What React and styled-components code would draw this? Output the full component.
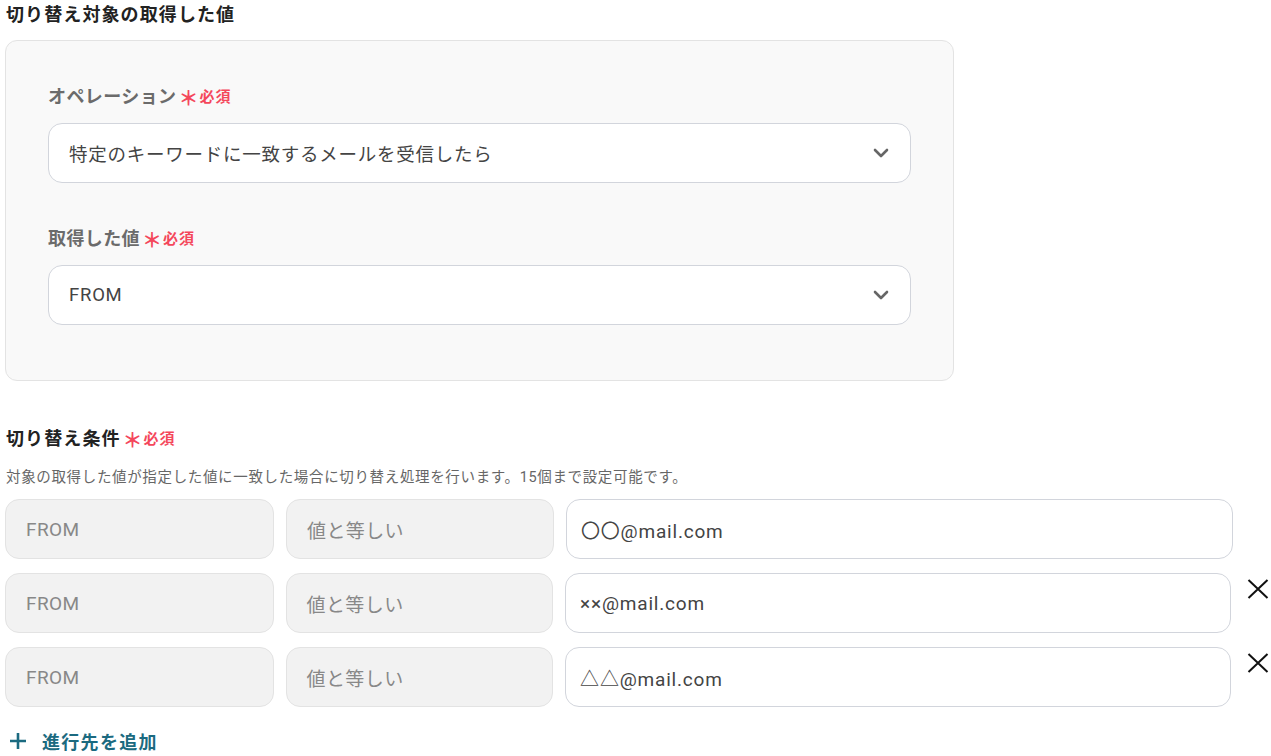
import styled, { createGlobalStyle } from "styled-components";

const GlobalStyle = createGlobalStyle`
  html, body {
    margin: 0;
    padding: 0;
    background: #fff;
  }
  body {
    font-family: Roboto, "Noto Sans CJK JP", sans-serif;
    color: #333;
  }
`;

const Page = styled.div`
  width: 1271px;
  padding: 2px 0 0 5px;
  box-sizing: border-box;
`;

const SectionTitle = styled.div`
  height: 26px;
  display: flex;
  align-items: center;
  gap: 5px;
  padding-left: 1px;
  font-size: 18px;
  font-weight: 700;
  letter-spacing: 1.1px;
  line-height: 26px;
  color: #222;
`;

const Required = styled.span`
  display: inline-flex;
  align-items: center;
  gap: 3px;
  height: 20px;
  line-height: 20px;
  color: #f4475b;
  font-size: 15px;
  font-weight: 700;
  letter-spacing: 1px;

  &::before {
    content: "＊";
    font-size: 20px;
    line-height: 1;
    margin-left: -3px;
    margin-right: -3px;
    margin-top: 4px;
  }
`;

const Panel = styled.div`
  margin-top: 12px;
  width: 949px;
  box-sizing: border-box;
  padding: 43px 42px 55px;
  background: #f9f9f9;
  border: 1px solid #e3e3e3;
  border-radius: 12px;
  display: flex;
  flex-direction: column;
  gap: 43px;
`;

const Field = styled.div`
  display: flex;
  flex-direction: column;
  gap: 13px;
`;

const Label = styled.div`
  height: 26px;
  display: flex;
  align-items: center;
  gap: 5px;
  font-size: 18px;
  font-weight: 700;
  letter-spacing: 0.4px;
  line-height: 26px;
  color: #6b6b6b;
`;

const Select = styled.div`
  height: 60px;
  box-sizing: border-box;
  display: flex;
  align-items: center;
  justify-content: space-between;
  padding: 0 21px 0 20px;
  background: #fff;
  border: 1px solid #d2d5dc;
  border-radius: 14px;
  font-size: 18.5px;
  letter-spacing: 0.75px;
  color: #444;
`;

const Conditions = styled.div`
  margin-top: 45px;
`;

const Description = styled.div`
  margin-top: 16px;
  padding-left: 1px;
  font-size: 14.5px;
  letter-spacing: 0.65px;
  color: #666;
  line-height: 20px;
`;

const Rows = styled.div`
  margin-top: 11px;
  display: flex;
  flex-direction: column;
  gap: 14px;
`;

const Row = styled.div`
  display: flex;
  align-items: flex-start;
  gap: 14px;
`;

const Fields = styled.div`
  width: ${(p) => (p.$removable ? 1226 : 1228)}px;
  display: grid;
  grid-template-columns: 269fr 268fr 667fr;
  gap: 12px;
`;

const Cell = styled.div`
  height: 60px;
  box-sizing: border-box;
  display: flex;
  align-items: center;
  padding-left: ${(p) => (p.$input ? 14 : 20)}px;
  background: ${(p) => (p.$input ? "#fff" : "#f2f2f2")};
  border: 1px solid ${(p) => (p.$input ? "#d2d5dc" : "#e3e3e3")};
  border-radius: 14px;
  font-size: 19px;
  letter-spacing: ${(p) => (p.$input ? 0.8 : 0.4)}px;
  color: ${(p) => (p.$input ? "#444" : "#888")};
`;

const Remove = styled.button`
  margin-top: 3px;
  width: 26px;
  height: 26px;
  padding: 0;
  border: none;
  background: none;
  display: flex;
  align-items: center;
  justify-content: center;
  cursor: pointer;
`;

const AddButton = styled.button`
  margin-top: 21px;
  padding: 0 0 0 4px;
  border: none;
  background: none;
  display: flex;
  align-items: center;
  gap: 15px;
  font-family: inherit;
  font-size: 18px;
  font-weight: 700;
  letter-spacing: 1.3px;
  color: #1b6a80;
  cursor: pointer;
`;

const Chevron = () => (
  <svg width="16" height="10" viewBox="0 0 16 10">
    <path d="M2 2 L8 8 L14 2" fill="none" stroke="#666" strokeWidth="2.6" strokeLinecap="round" strokeLinejoin="round" />
  </svg>
);

const Cross = () => (
  <svg width="22" height="20" viewBox="0 0 22 20">
    <path d="M1.5 1 L20.5 19 M20.5 1 L1.5 19" stroke="#111" strokeWidth="2" />
  </svg>
);

const Plus = () => (
  <svg width="18" height="18" viewBox="0 0 18 18">
    <path d="M9 1 V17 M1 9 H17" stroke="#1b6a80" strokeWidth="2.6" />
  </svg>
);

const conditions = [
  { value: "〇〇@mail.com", removable: false },
  { value: "××@mail.com", removable: true },
  { value: "△△@mail.com", removable: true },
];

export default function App() {
  return (
    <>
      <GlobalStyle />
      <Page>
        <SectionTitle>切り替え対象の取得した値</SectionTitle>
        <Panel>
          <Field>
            <Label>
              オペレーション<Required>必須</Required>
            </Label>
            <Select>
              <span>特定のキーワードに一致するメールを受信したら</span>
              <Chevron />
            </Select>
          </Field>
          <Field>
            <Label>
              取得した値<Required>必須</Required>
            </Label>
            <Select>
              <span>FROM</span>
              <Chevron />
            </Select>
          </Field>
        </Panel>

        <Conditions>
          <SectionTitle>
            切り替え条件<Required>必須</Required>
          </SectionTitle>
          <Description>
            対象の取得した値が指定した値に一致した場合に切り替え処理を行います。15個まで設定可能です。
          </Description>
          <Rows>
            {conditions.map((c, i) => (
              <Row key={i}>
                <Fields $removable={c.removable}>
                  <Cell>FROM</Cell>
                  <Cell>値と等しい</Cell>
                  <Cell $input>{c.value}</Cell>
                </Fields>
                {c.removable && (
                  <Remove aria-label="削除">
                    <Cross />
                  </Remove>
                )}
              </Row>
            ))}
          </Rows>
          <AddButton>
            <Plus />
            進行先を追加
          </AddButton>
        </Conditions>
      </Page>
    </>
  );
}
